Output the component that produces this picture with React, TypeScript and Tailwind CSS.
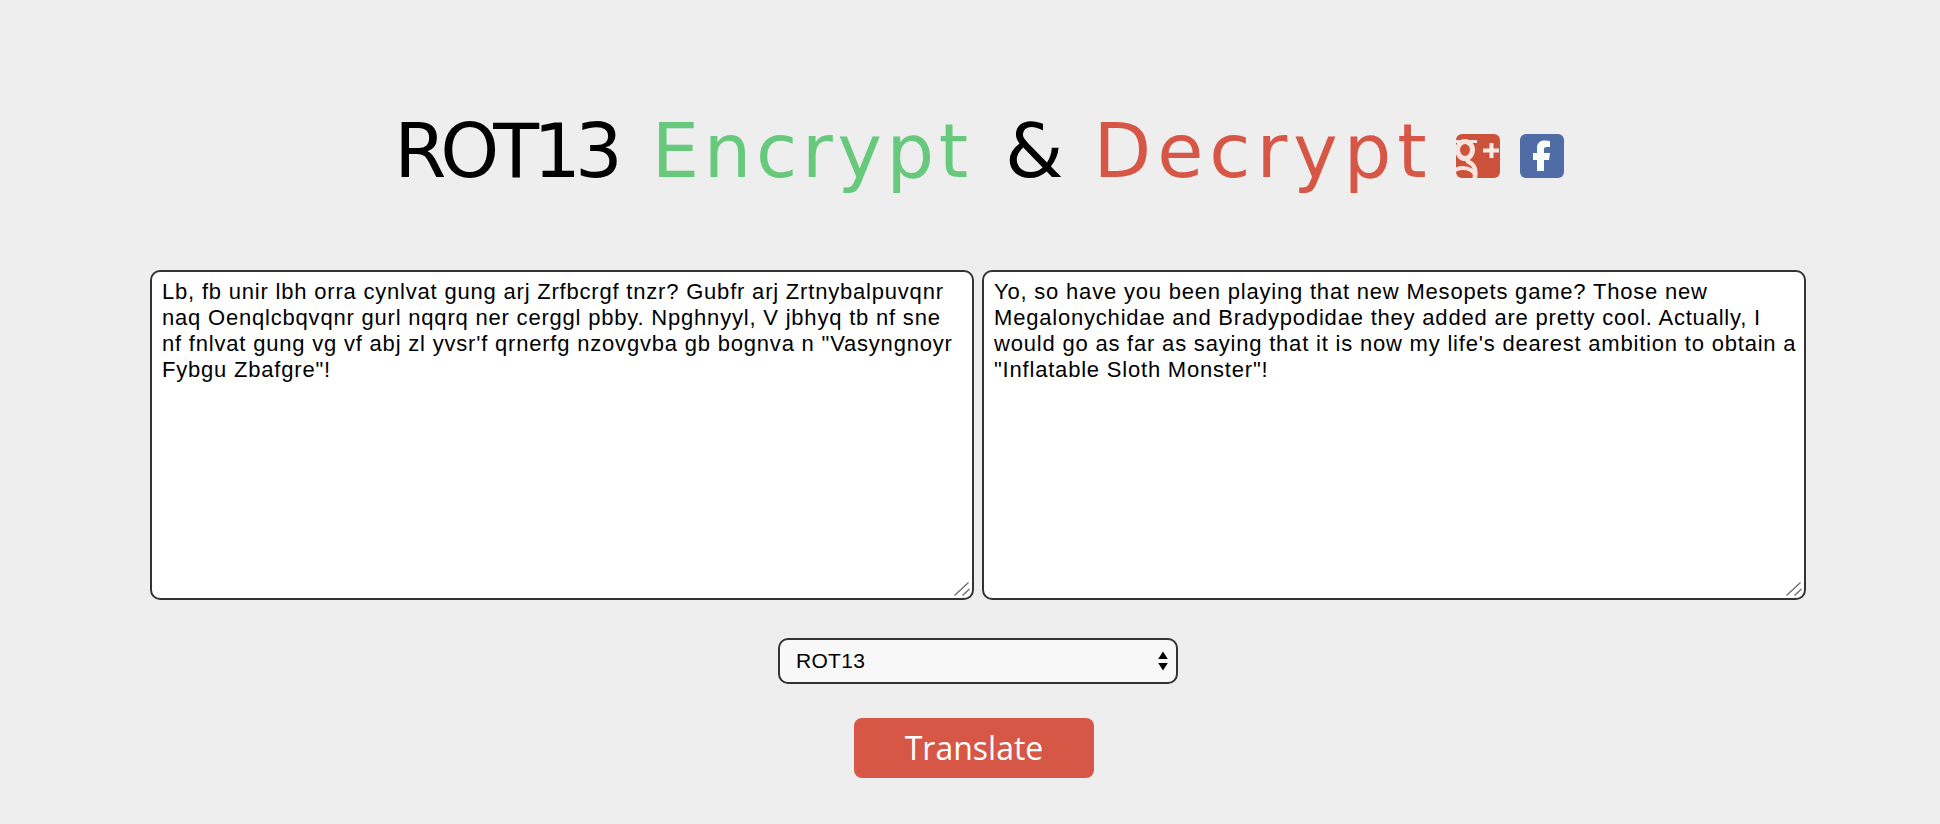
const leftText = `Lb, fb unir lbh orra cynlvat gung arj Zrfbcrgf tnzr? Gubfr arj Zrtnybalpuvqnr naq Oenqlcbqvqnr gurl nqqrq ner cerggl pbby. Npghnyyl, V jbhyq tb nf sne nf fnlvat gung vg vf abj zl yvsr'f qrnerfg nzovgvba gb bognva n "Vasyngnoyr Fybgu Zbafgre"!`;
const rightText = `Yo, so have you been playing that new Mesopets game? Those new Megalonychidae and Bradypodidae they added are pretty cool. Actually, I would go as far as saying that it is now my life's dearest ambition to obtain a "Inflatable Sloth Monster"!`;

function GooglePlusIcon() {
  return (
    <svg width="44" height="44" viewBox="0 0 44 44" className="block">
      <defs>
        <clipPath id="gp">
          <rect width="44" height="44" rx="6" />
        </clipPath>
      </defs>
      <g clipPath="url(#gp)">
        <rect width="44" height="44" fill="#cd523c" />
        <g className="blur-[0.6px]">
          <path d="M0 7.500h21" stroke="#f6e3de" strokeWidth="3" />
          <ellipse cx="9" cy="16" rx="7.500" ry="8.500" fill="none" stroke="#f6e3de" strokeWidth="5" />
          <path d="M12 24c-2 3 1 4 4 6 3 3 4 6 3 14" fill="none" stroke="#f6e3de" strokeWidth="4.500" />
          <ellipse cx="7" cy="42" rx="12" ry="8" fill="none" stroke="#f6e3de" strokeWidth="4" />
          <path d="M35.500 9v15M27 16.500h16" stroke="#f9ece8" strokeWidth="4" />
        </g>
      </g>
    </svg>
  );
}

function FacebookIcon() {
  return (
    <svg width="44" height="44" viewBox="0 0 44 44" className="block">
      <rect width="44" height="44" rx="6" fill="#506ca6" />
      <path
        className="blur-[0.6px]"
        d="M17 37V26h-4v-7h4v-5c0-5 3-7.500 7.500-7.500 2 0 4 .2 5.500.5v6h-3.500c-2 0-2.500 1-2.500 2.500v3.500h6l-1 7h-5v11z"
        fill="#fbfcfe"
      />
    </svg>
  );
}

function TextBox({ value }: { value: string }) {
  return (
    <div className="relative">
      <textarea
        readOnly
        defaultValue={value}
        className="block w-[824px] h-[330px] resize-none bg-white border-2 border-[#333333] rounded-[10px] pl-[10px] pr-[6px] py-[7px] text-[22px] tracking-[0.8px] leading-[26px] text-black outline-none"
      />
      <svg width="16" height="14" viewBox="0 0 16 14" className="absolute right-[4px] bottom-[4px] pointer-events-none">
        <path d="M0.500 13.500L14.500 0.500M8.500 13.500L15.500 7" stroke="#666666" strokeWidth="1.200" fill="none" />
      </svg>
    </div>
  );
}

export default function App() {
  return (
    <div className="min-h-[824px] bg-[#eeeeee] flex flex-col items-center pl-[16px] font-['Liberation_Sans',sans-serif]">
      <div className="h-[270px] flex items-start justify-center pt-[101px] pl-[2px]">
        <h1 className="h-[100px] flex items-center font-['DejaVu_Sans',sans-serif] font-normal text-[75px] leading-[100px] text-black whitespace-nowrap">
          <span className="tracking-[-6px]">ROT13</span>
          <span className="text-[#66c97c] ml-[35px] tracking-[4.7px]">Encrypt</span>
          <span className="ml-[32px]">&amp;</span>
          <span className="text-[#d75746] ml-[30px] tracking-[6px]">Decrypt</span>
        </h1>
        <div className="flex gap-[20px] ml-[23px] mt-[33px]">
          <GooglePlusIcon />
          <FacebookIcon />
        </div>
      </div>

      <div className="flex justify-center gap-[8px]">
        <TextBox value={leftText} />
        <TextBox value={rightText} />
      </div>

      <div className="relative mt-[38px] w-[400px]">
        <select className="appearance-none block w-full h-[46px] bg-[#f8f8f8] border-2 border-[#333333] rounded-[10px] pl-[16px] pr-[30px] text-[21px] tracking-[0.3px] text-black outline-none">
          <option>ROT13</option>
        </select>
        <svg width="10" height="20" viewBox="0 0 10 20" className="absolute right-[10px] top-[13px] pointer-events-none">
          <path d="M5 0.500L9.800 8H0.200zM5 19.500L0.200 12h9.600z" fill="#000000" />
        </svg>
      </div>

      <button className="mt-[34px] mr-[8px] w-[240px] h-[60px] bg-[#d75746] rounded-[8px] text-white font-['Open_Sans',sans-serif] font-medium text-[32px] leading-none">
        Translate
      </button>
    </div>
  );
}
